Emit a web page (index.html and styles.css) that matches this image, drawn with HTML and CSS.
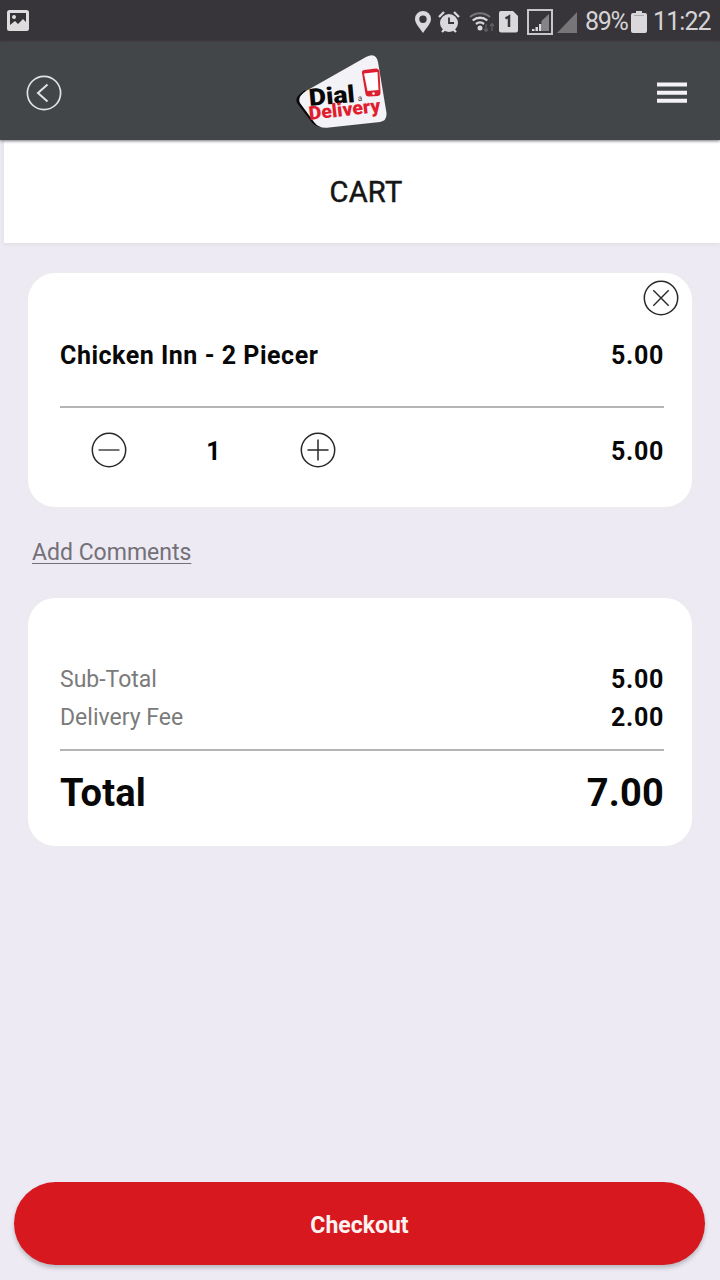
FILE: index.html
```html
<!DOCTYPE html>
<html lang="en">
<head>
<meta charset="utf-8">
<title>Cart</title>
<link rel="stylesheet" href="styles.css">
</head>
<body>
<div class="screen">
  <div class="status">
    <svg class="status-picture" width="22" height="22" viewBox="0 0 22 22"><rect width="22" height="21" rx="2.5" fill="#dedcdd"/><path d="M3 3h16v9l-3-3-5 5-3-3-5 4z" fill="#353337"/><circle cx="7" cy="7" r="2" fill="#dedcdd"/></svg>
    <div class="status-right">
      <svg width="16" height="22" viewBox="0 0 16 22"><path fill="#dad8da" fill-rule="evenodd" d="M8 0a8 8 0 0 0-8 8c0 5 5 9 8 14 3-5 8-9 8-14a8 8 0 0 0-8-8zm0 4.5a3.7 3.7 0 1 1 0 7.4 3.7 3.7 0 0 1 0-7.4z"/></svg>
      <svg class="alarm" width="22" height="22" viewBox="0 0 22 22"><circle cx="11" cy="12" r="9" fill="#dad8da"/><path d="M1 6l5-5M21 6l-5-5M4 21l3-3M18 21l-3-3" stroke="#dad8da" stroke-width="2.3"/><path d="M11 6.5V12h5" fill="none" stroke="#39363a" stroke-width="1.8"/></svg>
      <svg class="wifi" width="26" height="22" viewBox="0 0 26 22"><g fill="none"><path d="M1 6a15 15 0 0 1 20 0" stroke="#777577" stroke-width="2"/><path d="M3.7 9.5a11 11 0 0 1 14.6 0M7 13a6.5 6.5 0 0 1 8 0" stroke="#dad8da" stroke-width="2.3"/><path d="M17 13v7m-2-2 2 2.500 2-2.500M23 20v-7m-2 2 2-2.500 2 2.500" stroke="#5f5d60" stroke-width="1.400"/></g><circle cx="11" cy="17" r="2.500" fill="#dad8da"/></svg>
      <svg class="sim" width="19" height="22" viewBox="0 0 19 22"><path d="M2 0h12l5 5v14.500a2 2 0 0 1-2 2H2a2 2 0 0 1-2-2V2a2 2 0 0 1 2-2z" fill="#dad8da"/><path d="M6.500 7.500 10 5.500V16" fill="none" stroke="#38363a" stroke-width="2.500"/></svg>
      <svg class="signal-box" width="26" height="26" viewBox="0 0 26 26"><rect x="1" y="1" width="24" height="24" fill="none" stroke="#c8c6c8" stroke-width="2"/><path d="M5 22v-2h2.500v2zM8.500 22v-4H11v4zM12 22v-7h2.500v7z" fill="#dad8da"/><path d="M14.500 22V12L22 5v17z" fill="#858386"/></svg>
      <svg class="signal" width="20" height="21" viewBox="0 0 20 21"><path d="M20 0v21H0z" fill="#777578"/></svg>
      <span class="percent">89%</span>
      <svg class="battery" width="16" height="22" viewBox="0 0 16 22"><path d="M5 0h6v2h3a2 2 0 0 1 2 2v16a2 2 0 0 1-2 2H2a2 2 0 0 1-2-2V4a2 2 0 0 1 2-2h3z" fill="#dad8da"/><path d="M3 4.500h10" stroke="#aaa8aa"/></svg>
      <span class="clock">11:22</span>
    </div>
  </div>
  <header class="header">
    <svg width="36" height="36" viewBox="0 0 36 36" fill="none" stroke="#e2e2e2"><circle cx="18" cy="18" r="16.600" stroke-width="1.700"/><path d="M21.500 9.500 12 18l9.500 8.500" stroke-width="2"/></svg>
    <svg class="logo" width="94" height="76" viewBox="0 0 94 76">
      <path d="M9 37 4 41Q-1 45 1 50L14 67Q18 73 24 74L30 70z" fill="#090909"/>
      <path d="M10 38 70 4Q80-1 82 9L90.500 60Q91 68 84 69L33 74.500Q23 76 18 69L4 50Q1 44 10 38z" fill="#f3f2f6"/>
      <g transform="translate(13.500 53) rotate(-5)"><text class="logo-dial" textLength="46" lengthAdjust="spacingAndGlyphs">Dial</text></g>
      <g transform="translate(13.500 67) rotate(-6.500)"><text class="logo-delivery" textLength="72" lengthAdjust="spacingAndGlyphs">Delivery</text></g>
      <g transform="translate(62 48) rotate(-5)"><text class="logo-a" x="0" y="0">a</text></g>
      <path d="M66 20Q65.500 17.500 68 17L80 15.500Q83 15.500 83.500 19L84.500 39Q85 42 82 43L73 43.500Q70 43.500 69.500 41z" fill="#dc2030"/><path d="M68 20.500 81.500 19 82.500 37 71.500 38z" fill="#fff"/><circle cx="77.500" cy="40.500" r="1.300" fill="#fff"/>
    </svg>
    <svg width="32" height="24" viewBox="0 0 32 24"><path d="M1 1.500h30v4H1zM1 9.700h30v4H1zM1 17.800h30v4H1z" fill="#f4f2f5"/></svg>
  </header>
  <div class="title-bar"><h1 class="title">CART</h1></div>
  <main class="content">
    <section class="card item-card">
      <svg class="remove" width="36" height="36" viewBox="0 0 36 36" fill="none" stroke="#292929"><circle cx="18" cy="18" r="16.700" stroke-width="1.500"/><path d="m10.300 10.300 15.400 15.400M25.700 10.300 10.300 25.700" stroke-width="1.400"/></svg>
      <div class="row item-row"><span class="item-name">Chicken Inn - 2 Piecer</span><span class="amount">5.00</span></div>
      <div class="row quantity-row">
        <div class="stepper">
          <svg width="36" height="36" viewBox="0 0 36 36" fill="none" stroke="#292929"><circle cx="18" cy="18" r="16.700" stroke-width="1.500"/><path d="M7.500 18h21" stroke-width="1.300"/></svg>
          <span class="quantity">1</span>
          <svg width="36" height="36" viewBox="0 0 36 36" fill="none" stroke="#292929"><circle cx="18" cy="18" r="16.700" stroke-width="1.500"/><path d="M7.500 18h21M18 7.500v21" stroke-width="1.500"/></svg>
        </div>
        <span class="amount">5.00</span>
      </div>
    </section>
    <a class="comments">Add Comments</a>
    <section class="card totals">
      <div class="row fee-row"><span class="subtotal-label">Sub-Total</span><span class="amount">5.00</span></div>
      <div class="row fee-row"><span class="fee-label">Delivery Fee</span><span class="amount">2.00</span></div>
      <div class="row total-row"><span class="total-label">Total</span><span class="total-amount">7.00</span></div>
    </section>
  </main>
  <button class="checkout">Checkout</button>
</div>
</body>
</html>
```
FILE: styles.css
```css
* { box-sizing: border-box; }
body { margin: 0; font-family: Roboto, "Liberation Sans", sans-serif; }
.screen { width: 720px; height: 1280px; display: flex; flex-direction: column; background: #edeaf3; overflow: hidden; }
.status { height: 42px; flex: none; display: flex; justify-content: space-between; background: #38353a; color: #d5d3d5; padding: 10px 9px 0 7px; }
.status-right { display: flex; height: 24px; align-items: center; }
.status svg { flex: none; }
.alarm { margin-left: 7px; }
.wifi { margin-left: 9px; }
.sim { margin-left: 4px; }
.signal-box { margin-left: 9px; }
.signal { margin-left: 4px; }
.percent { margin-left: 8px; width: 42px; font-size: 25px; line-height: 26px; letter-spacing: -1.3px; white-space: nowrap; }
.battery { margin-left: 4px; }
.clock { margin-left: 6px; width: 58px; font-size: 25px; line-height: 26px; letter-spacing: -0.9px; white-space: nowrap; }
.header { height: 98px; flex: none; display: flex; justify-content: space-between; align-items: center; padding: 4px 32px 0 26px; background: #434648; z-index: 1; box-shadow: 0 1px 3px #77747d; }
.logo { margin: -4px 32px 0 0; }
.logo-dial { font: 900 24px Roboto, sans-serif; fill: #080808; }
.logo-delivery { font: 900 19px Roboto, sans-serif; fill: #e21d2e; }
.logo-a { font: 8px Roboto, sans-serif; fill: #333; }
.title-bar { height: 103px; flex: none; margin-left: 4px; display: flex; justify-content: center; padding: 35px 0 0 8px; background: #fff; box-shadow: 0 1px 4px #dddade; }
.title { margin: 0; font-size: 29px; line-height: 35px; font-weight: 400; color: #151515; letter-spacing: 0.3px; -webkit-text-stroke: 0.5px #151515; }
.content { flex: 1; display: flex; flex-direction: column; padding: 30px 28px 0; }
.card { background: #fff; border-radius: 27px; padding: 0 28px 0 32px; box-shadow: 0 0 7px #eceaec; flex: none; }
.row { display: flex; justify-content: space-between; }
.item-card { height: 234px; position: relative; padding-top: 67px; }
.remove { position: absolute; right: 13px; top: 7px; }
.item-row { height: 68px; border-bottom: 2px solid #b4b4b4; line-height: 32px; }
.item-name { font-size: 25px; font-weight: 700; letter-spacing: 0.52px; color: #080808; white-space: nowrap; }
.amount { font-size: 25px; font-weight: 700; letter-spacing: 0.7px; line-height: 32px; color: #080808; }
.quantity-row { padding-top: 28px; }
.stepper { display: flex; padding-left: 31px; height: 36px; margin-top: -4px; }
.quantity { width: 173px; text-align: center; font-size: 25px; font-weight: 700; line-height: 40px; }
.comments { align-self: flex-start; margin: 31px 0 32px 4px; height: 28px; line-height: 30px; font-size: 23px; color: #737078; text-decoration: underline; text-decoration-thickness: 1px; text-underline-offset: 3px; }
.totals { height: 248px; padding-top: 66px; }
.fee-row { height: 38px; line-height: 32px; font-size: 23px; color: #7b7b7b; }
.total-row { border-top: 2px solid #b4b4b4; margin-top: 9px; padding-top: 20px; line-height: 45px; font-size: 38px; font-weight: 700; color: #080808; }
.total-label { letter-spacing: 0.2px; }
.total-amount { letter-spacing: 0.2px; }
.checkout { flex: none; width: 691px; height: 83px; margin: 0 0 15px 14px; padding: 3px 0 0; border: 0; border-radius: 42px; background: #d7191f; color: #fff2f1; font: 700 23px Roboto, sans-serif; box-shadow: 0 3px 4px #b9b9c1; }
```
